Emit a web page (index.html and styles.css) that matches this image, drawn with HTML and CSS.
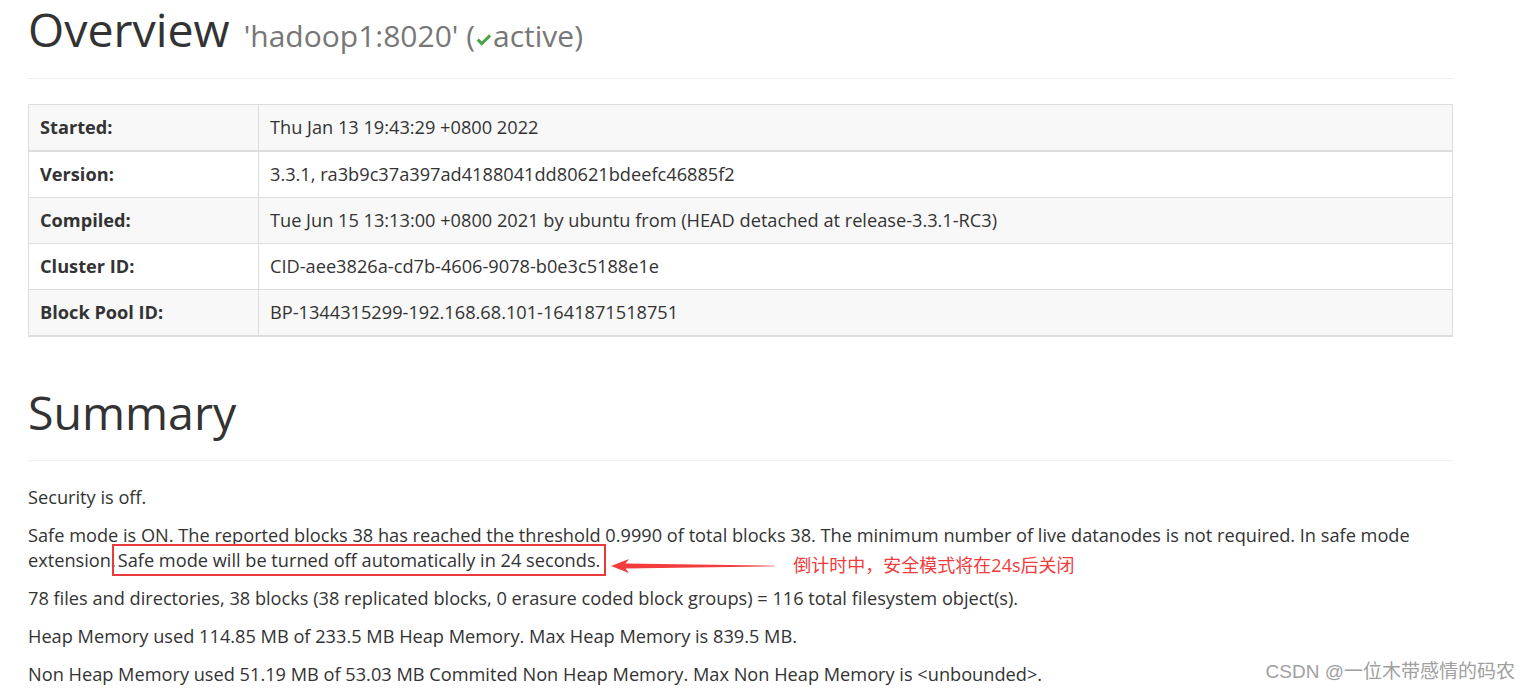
FILE: index.html
```html
<!DOCTYPE html>
<html>
<head>
<meta charset="utf-8">
<link rel="stylesheet" href="styles.css">
</head>
<body>
<div class="container">
  <div class="page-header">
    <h1>Overview <small>'hadoop1:8020' (<svg class="check" viewBox="0 0 16 16" width="17" height="17"><path d="M1.5 9.2 L3.6 7.1 L6.4 9.8 L13.2 3 L15.2 5.1 L6.4 13.9 Z" fill="#4aa345"/></svg>active)</small></h1>
  </div>
  <table class="info">
    <tr><th>Started:</th><td>Thu Jan 13 19:43:29 +0800 2022</td></tr>
    <tr><th>Version:</th><td>3.3.1, ra3b9c37a397ad4188041dd80621bdeefc46885f2</td></tr>
    <tr><th>Compiled:</th><td>Tue Jun 15 13:13:00 +0800 2021 by ubuntu from (HEAD detached at release-3.3.1-RC3)</td></tr>
    <tr><th>Cluster ID:</th><td>CID-aee3826a-cd7b-4606-9078-b0e3c5188e1e</td></tr>
    <tr><th>Block Pool ID:</th><td>BP-1344315299-192.168.68.101-1641871518751</td></tr>
  </table>
  <div class="page-header summary">
    <h1>Summary</h1>
  </div>
  <p>Security is off.</p>
  <p>Safe mode is ON. The reported blocks 38 has reached the threshold 0.9990 of total blocks 38. The minimum number of live datanodes is not required. In safe mode extension.<span class="boxed">Safe mode will be turned off automatically in 24 seconds.<span class="note"><svg class="arrow" width="164" height="16" viewBox="0 0 164 16"><path d="M0 8 L18 1 L14.5 5.4 L164 7.7 L164 8.3 L14.5 10.6 L18 15 Z" fill="#f33c3c"/></svg><span class="note-text">倒计时中，安全模式将在24s后关闭</span></span></span></p>
  <p>78 files and directories, 38 blocks (38 replicated blocks, 0 erasure coded block groups) = 116 total filesystem object(s).</p>
  <p>Heap Memory used 114.85 MB of 233.5 MB Heap Memory. Max Heap Memory is 839.5 MB.</p>
  <p>Non Heap Memory used 51.19 MB of 53.03 MB Commited Non Heap Memory. Max Non Heap Memory is &lt;unbounded&gt;.</p>
</div>
<div class="watermark">CSDN @一位木带感情的码农</div>
</body>
</html>
```
FILE: styles.css
```css
html, body {
  margin: 0;
  padding: 0;
  background: #fff;
}
body {
  font-family: "Open Sans", "Noto Sans CJK SC", sans-serif;
  font-size: 18.2px;
  line-height: 25px;
  color: #333;
  position: relative;
  height: 691px;
  overflow: hidden;
}
.container {
  width: 1425px;
  margin-left: 28px;
}
.page-header {
  border-bottom: 1px solid #eee;
  padding-bottom: 20px;
  margin-bottom: 25px;
}
h1 {
  margin: 0;
  font-weight: 400;
  font-size: 46.5px;
  line-height: 58px;
  color: #333;
}
h1 small {
  font-size: 30px;
  line-height: 1;
  color: #777;
  margin-left: 2px;
}
.check {
  vertical-align: -1px;
  margin-right: 1px;
}
.info {
  width: 100%;
  border-collapse: collapse;
  border: 1px solid #ddd;
  border-bottom: 2px solid #ddd;
}
.info th, .info td {
  border: 1px solid #ddd;
  height: 45px;
  padding: 0 11px;
  text-align: left;
}
.info th {
  width: 207px;
  font-weight: 700;
}
.info tr:first-child th, .info tr:first-child td {
  border-bottom: 2px solid #ddd;
}
.info tr:nth-child(odd) {
  background: #f8f8f8;
}
.summary {
  margin-top: 46px;
  padding-bottom: 19px;
  margin-bottom: 24px;
}
p {
  margin: 0 0 13px;
}
.boxed {
  position: relative;
  white-space: nowrap;
  outline: 2px solid #e83a3a;
  outline-offset: 2px;
  padding: 0 2px;
}
.note {
  position: absolute;
  left: 100%;
  margin-left: 9px;
  top: 5px;
  white-space: nowrap;
  display: flex;
  align-items: center;
  gap: 18px;
}
.note-text {
  color: #f03c3c;
  font-size: 18px;
}
.watermark {
  position: absolute;
  right: 15px;
  bottom: 7px;
  font-family: "Liberation Sans", "Noto Sans CJK SC", sans-serif;
  font-size: 19px;
  color: #a0a0a0;
}
```
